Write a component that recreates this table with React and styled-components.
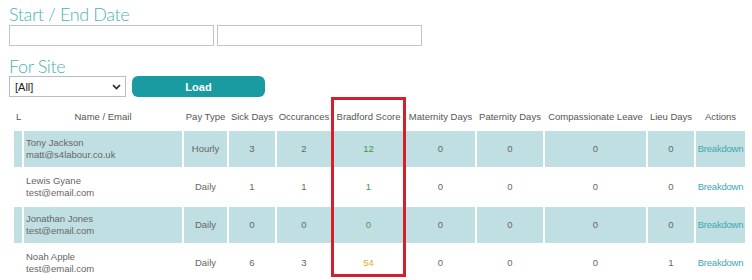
import React from "react";
import styled, { createGlobalStyle } from "styled-components";

const Global = createGlobalStyle`
  html, body { margin: 0; padding: 0; background: #fff; }
  body { font-family: "Liberation Sans", Arial, sans-serif; }
`;

const Page = styled.div`
  position: relative;
  width: 752px;
  height: 280px;
  overflow: hidden;
  padding: 3px 0 0 9px;
  box-sizing: border-box;
`;

const Title = styled.div`
  font-family: "Lato", "Liberation Sans", sans-serif;
  font-weight: 300;
  font-size: 18px;
  line-height: ${(p) => p.$lh || 22}px;
  color: #4cb2b8;
  letter-spacing: -0.4px;
  margin-top: ${(p) => p.$mt || 0}px;
`;

const Row = styled.div`
  display: flex;
  gap: ${(p) => p.$gap}px;
  align-items: center;
`;

const TextInput = styled.div`
  width: 205px;
  height: 21px;
  box-sizing: border-box;
  border: 1px solid #c4c4c4;
  background: #fff;
`;

const SelectBox = styled.div`
  width: 117px;
  height: 21px;
  box-sizing: border-box;
  border: 1px solid #bdbdbd;
  display: flex;
  align-items: center;
  justify-content: space-between;
  padding: 0 4px 0 5px;
  font-size: 11px;
  color: #222;
`;

const LoadButton = styled.div`
  width: 133px;
  height: 21px;
  margin-left: 2px;
  border-radius: 6px;
  background: #1a9aa1;
  color: #fff;
  font-size: 11px;
  font-weight: bold;
  display: flex;
  align-items: center;
  justify-content: center;
`;

const Table = styled.table`
  margin: 4px 0 0 3px;
  table-layout: fixed;
  border-collapse: separate;
  border-spacing: 2px;
  width: 735px;
  font-family: "Liberation Sans", Arial, sans-serif;
  font-size: 9.5px;
`;

const Col = styled.col`
  width: ${(p) => p.$w}px;
`;

const Th = styled.th`
  font-weight: normal;
  color: #555;
  height: 26px;
  padding: 0;
  text-align: ${(p) => (p.$left ? "left" : "center")};
  padding-left: ${(p) => (p.$left ? 2 : 0)}px;
  white-space: nowrap;
`;

const Tr = styled.tr`
  background: ${(p) => (p.$shade ? "#c0dfe2" : "transparent")};
`;

const Td = styled.td`
  height: 36px;
  padding: 0 0 0 ${(p) => (p.$left ? 2 : 0)}px;
  text-align: ${(p) => (p.$left ? "left" : "center")};
  color: ${(p) => p.$color || "#666"};
  line-height: 12px;
  white-space: nowrap;
`;

const Link = styled.span`
  color: #40a8b4;
  letter-spacing: -0.2px;
`;

const Highlight = styled.div`
  position: absolute;
  left: 331px;
  top: 97px;
  width: 75px;
  height: 180px;
  box-sizing: border-box;
  border: 3px solid #d3202a;
  pointer-events: none;
`;

const cols = [8, 158, 43, 46, 54, 71, 69, 66, 101, 46, 49];
const headers = [
  "L",
  "Name / Email",
  "Pay Type",
  "Sick Days",
  "Occurances",
  "Bradford Score",
  "Maternity Days",
  "Paternity Days",
  "Compassionate Leave",
  "Lieu Days",
  "Actions",
];

const rows = [
  { name: "Tony Jackson", email: "matt@s4labour.co.uk", pay: "Hourly", sick: 3, occ: 2, brad: 12, bc: "#3f9a45", lieu: 0 },
  { name: "Lewis Gyane", email: "test@email.com", pay: "Daily", sick: 1, occ: 1, brad: 1, bc: "#3f9a45", lieu: 0 },
  { name: "Jonathan Jones", email: "test@email.com", pay: "Daily", sick: 0, occ: 0, brad: 0, bc: "#3f9a45", lieu: 0 },
  { name: "Noah Apple", email: "test@email.com", pay: "Daily", sick: 6, occ: 3, brad: 54, bc: "#f0a830", lieu: 1 },
];

export default function App() {
  return (
    <>
      <Global />
      <Page>
        <Title>Start / End Date</Title>
        <Row $gap={3}>
          <TextInput />
          <TextInput />
        </Row>
        <Title $mt={10} $lh={20}>For Site</Title>
        <Row $gap={4}>
          <SelectBox>
            <span>[All]</span>
            <svg width="9" height="6" viewBox="0 0 9 6">
              <path d="M1 1 L4.5 4.5 L8 1" fill="none" stroke="#222" strokeWidth="1.6" />
            </svg>
          </SelectBox>
          <LoadButton>Load</LoadButton>
        </Row>
        <Table>
          <colgroup>
            {cols.map((w, i) => (
              <Col key={i} $w={w} />
            ))}
          </colgroup>
          <thead>
            <tr>
              {headers.map((h, i) => (
                <Th key={h} $left={i === 0}>
                  {h}
                </Th>
              ))}
            </tr>
          </thead>
          <tbody>
            {rows.map((r, i) => (
              <Tr key={r.name} $shade={i % 2 === 0}>
                <Td />
                <Td $left>
                  {r.name}
                  <br />
                  {r.email}
                </Td>
                <Td>{r.pay}</Td>
                <Td>{r.sick}</Td>
                <Td>{r.occ}</Td>
                <Td $color={r.bc}>{r.brad}</Td>
                <Td>0</Td>
                <Td>0</Td>
                <Td>0</Td>
                <Td>{r.lieu}</Td>
                <Td>
                  <Link>Breakdown</Link>
                </Td>
              </Tr>
            ))}
          </tbody>
        </Table>
        <Highlight />
      </Page>
    </>
  );
}
